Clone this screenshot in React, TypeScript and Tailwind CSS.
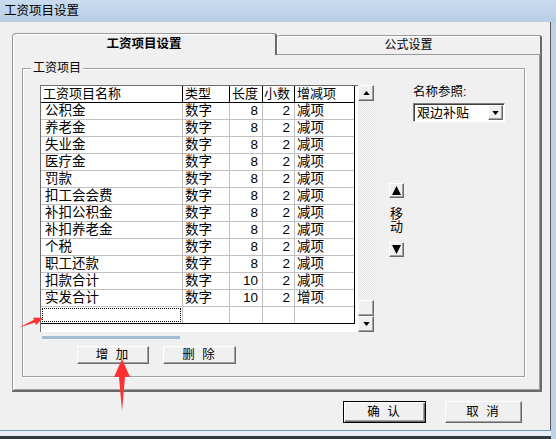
import React from 'react';

const ROWS = [
  { name: '公积金', len: '8', kind: '减项' },
  { name: '养老金', len: '8', kind: '减项' },
  { name: '失业金', len: '8', kind: '减项' },
  { name: '医疗金', len: '8', kind: '减项' },
  { name: '罚款', len: '8', kind: '减项' },
  { name: '扣工会会费', len: '8', kind: '减项' },
  { name: '补扣公积金', len: '8', kind: '减项' },
  { name: '补扣养老金', len: '8', kind: '减项' },
  { name: '个税', len: '8', kind: '减项' },
  { name: '职工还款', len: '8', kind: '减项' },
  { name: '扣款合计', len: '10', kind: '减项' },
  { name: '实发合计', len: '10', kind: '增项' },
];

function Tri({ up, big }: { up?: boolean; big?: boolean }) {
  if (big) {
    return (
      <svg width="9" height="9" viewBox="0 0 9 9">
        <path d={up ? 'M0 9 L4.5 0 L9 9 Z' : 'M0 0 L9 0 L4.5 9 Z'} fill="#000" />
      </svg>
    );
  }
  return (
    <svg width="7" height="4" viewBox="0 0 8 5">
      <path d={up ? 'M0 5 L4 0 L8 5 Z' : 'M0 0 L8 0 L4 5 Z'} fill="#000" />
    </svg>
  );
}

function SmallButton({ up, big, className = '' }: { up?: boolean; big?: boolean; className?: string }) {
  return (
    <div
      className={`flex items-center justify-center bg-[#f0f0f0] border border-t-white border-l-white border-r-[#696969] border-b-[#696969] shadow-[inset_-1px_-1px_0_#a0a0a0] ${className}`}
    >
      <Tri up={up} big={big} />
    </div>
  );
}

function Button({ label, def, className = '' }: { label: string; def?: boolean; className?: string }) {
  return (
    <div
      className={`flex items-center justify-center bg-[#f0f0f0] text-[12.5px] text-black tracking-[2px] ${
        def
          ? 'border border-black shadow-[inset_1px_1px_0_#fff,inset_-1px_-1px_0_#696969,inset_-2px_-2px_0_#a0a0a0]'
          : 'border border-t-white border-l-white border-r-[#696969] border-b-[#696969] shadow-[inset_-1px_-1px_0_#a0a0a0]'
      } ${className}`}
    >
      {label}
    </div>
  );
}

function Grid() {
  const cell = 'h-full border-r flex items-center leading-[16px] text-[13.5px]';
  return (
    <div className="flex">
      <div className="w-[318px] h-[247px] bg-white border-t border-l border-[#6d6d6d] flex flex-col">
        <div className="w-[314px] border-r border-black">
          {/* header */}
          <div className="flex h-[17px] border-b border-black">
            <div className={`${cell} w-[142px] border-black pl-[2px] text-[13px]`}>工资项目名称</div>
            <div className={`${cell} w-[47px] border-black pl-[2px] text-[13px]`}>类型</div>
            <div className={`${cell} w-[33px] border-black pl-[2px] text-[13px]`}>长度</div>
            <div className={`${cell} w-[32px] border-black pl-[1px] text-[13px]`}>小数</div>
            <div className={`${cell} w-[59px] border-transparent pl-[2px] text-[13px]`}>增减项</div>
          </div>
          {ROWS.map((r) => (
            <div key={r.name} className="flex h-[17px] border-b border-[#c0c0c0]">
              <div className={`${cell} w-[142px] border-[#c0c0c0] pl-[4px]`}>{r.name}</div>
              <div className={`${cell} w-[47px] border-[#c0c0c0] pl-[2px]`}>数字</div>
              <div className={`${cell} w-[33px] border-[#c0c0c0] justify-end pr-[4px]`}>{r.len}</div>
              <div className={`${cell} w-[32px] border-[#c0c0c0] justify-end pr-[4px]`}>2</div>
              <div className={`${cell} w-[59px] border-transparent pl-[2px]`}>{r.kind}</div>
            </div>
          ))}
          {/* new empty row */}
          <div className="flex h-[17px] border-b border-black">
            <div className="h-full w-[142px] border-r border-[#c0c0c0] p-[1px]">
              <div className="h-full w-full border border-dotted border-black" />
            </div>
            <div className="h-full w-[47px] border-r border-[#c0c0c0]" />
            <div className="h-full w-[33px] border-r border-[#c0c0c0]" />
            <div className="h-full w-[32px] border-r border-[#c0c0c0]" />
            <div className="h-full w-[59px]" />
          </div>
        </div>
      </div>
      {/* vertical scrollbar */}
      <div className="w-[16px] h-[247px] flex flex-col bg-[repeating-conic-gradient(#e2e2e2_0_25%,#fbfbfb_0_50%)] bg-[length:2px_2px]">
        <SmallButton up className="w-[16px] h-[16px]" />
        <div className="flex-1" />
        <div className="w-[16px] h-[16px] bg-[#f0f0f0] border border-t-white border-l-white border-r-[#696969] border-b-[#696969] shadow-[inset_-1px_-1px_0_#a0a0a0]" />
        <SmallButton className="w-[16px] h-[16px]" />
      </div>
    </div>
  );
}

export default function App() {
  return (
    <div className="relative w-[556px] h-[439px] overflow-hidden bg-[#bcd2e9] font-['Liberation_Sans','Noto_Sans_CJK_SC',sans-serif] text-black flex flex-col">
      {/* title bar */}
      <div className="h-[22px] flex items-center pl-[4px] text-[12.5px] bg-gradient-to-b from-[#cadcef] to-[#b7cde6]">
        工资项目设置
      </div>

      {/* window body */}
      <div className="w-[551px] h-[408px] bg-[#f0f0f0] border-r border-[#5a5a5a] pl-[12px] pt-[11px] flex flex-col">
        {/* tab control */}
        <div className="w-[530px] flex flex-col">
          <div className="flex items-end h-[22px]">
            <div className="w-[265px] h-[22px] rounded-tl-[4px] rounded-tr-[3px] border-t border-l border-r-2 border-[#9a9a9a] border-r-[#6a6a6a] shadow-[inset_1px_1px_0_#fff] flex items-center justify-center font-bold text-[12.5px] bg-[#f0f0f0]">
              工资项目设置
            </div>
            <div className="w-[265px] h-[20px] rounded-t-[3px] border-t border-r-2 border-[#9a9a9a] border-r-[#6a6a6a] border-b border-b-[#9a9a9a] shadow-[inset_1px_1px_0_#fff] flex items-center justify-center text-[12px] bg-[#f0f0f0]">
              公式设置
            </div>
          </div>
          <div className="h-[337px] border-l border-[#9a9a9a] border-r-2 border-b-2 border-r-[#6a6a6a] border-b-[#6a6a6a] shadow-[inset_1px_0_0_#fff,inset_-1px_-1px_0_#a0a0a0] pl-[9px] pt-[13px]">
            {/* group box */}
            <div className="relative w-[503px] h-[309px] border border-[#a0a0a0] shadow-[1px_1px_0_#fff,inset_1px_1px_0_#fff] pl-[17px] pt-[16px] flex">
              <span className="absolute -top-[8px] left-[8px] px-[2px] bg-[#f0f0f0] text-[12px] leading-[14px]">
                工资项目
              </span>

              {/* left column */}
              <div className="flex flex-col">
                <Grid />
                <div className="mt-[4px] ml-[2px] w-[138px] h-[3px] bg-[#a3bcd3]" />
                <div className="mt-[7px] ml-[37px] flex gap-[14px]">
                  <Button label="增 加" className="w-[72px] h-[18px]" />
                  <Button label="删 除" className="w-[73px] h-[18px]" />
                </div>
              </div>

              {/* move buttons */}
              <div className="ml-[15px] pt-[98px] flex flex-col items-center w-[15px]">
                <SmallButton up big className="w-[15px] h-[15px]" />
                <div className="mt-[9px] text-[13px] leading-[13px] w-[13px] text-center">移动</div>
                <SmallButton big className="mt-[9px] w-[15px] h-[15px]" />
              </div>

              {/* name reference */}
              <div className="ml-[9px] flex flex-col">
                <div className="h-[14px] text-[12.5px] leading-[14px]">名称参照:</div>
                <div className="mt-[4px] w-[92px] h-[19px] bg-white border border-t-[#808080] border-l-[#808080] border-r-white border-b-white shadow-[inset_1px_1px_0_#404040] flex items-center justify-between pl-[3px] pr-[1px]">
                  <span className="text-[13px] leading-[15px]">艰边补贴</span>
                  <SmallButton className="w-[15px] h-[15px]" />
                </div>
              </div>
            </div>
          </div>
        </div>

        {/* dialog buttons */}
        <div className="mt-[9px] pl-[331px] flex gap-[19px]">
          <Button label="确 认" def className="w-[83px] h-[22px]" />
          <Button label="取 消" className="w-[77px] h-[22px]" />
        </div>
      </div>

      {/* bottom frame */}
      <div className="h-[9px] w-[551px] bg-[#e8eef3] border-t border-[#6f9ab0] border-b-[3px] border-b-[#2f3a40]" />

      {/* red annotation arrows */}
      <svg className="absolute left-0 top-0 pointer-events-none" width="556" height="439">
        <polygon points="43,318 36,325 35.1,322.6 19,327.5 34.1,319.8 33.2,317.5" fill="#ff3030" />
        <polygon points="122,359 130,377 125,377 122,411 119,377 114,377" fill="#ff3030" />
      </svg>
    </div>
  );
}
